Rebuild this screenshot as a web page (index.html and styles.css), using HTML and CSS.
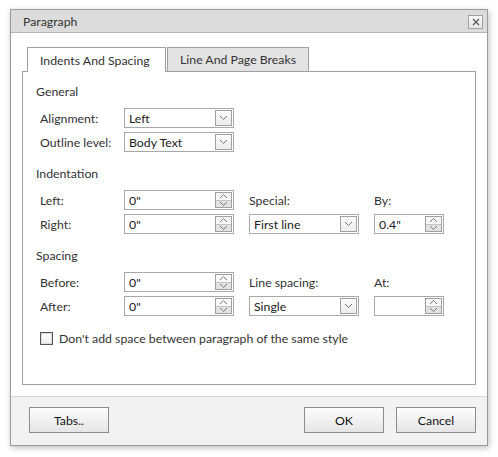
FILE: index.html
```html
<!DOCTYPE html>
<html>
<head>
<meta charset="utf-8">
<link rel="stylesheet" href="styles.css">
</head>
<body>
<div class="dialog">
  <div class="titlebar">
    <span class="title">Paragraph</span>
    <span class="close"><svg width="8" height="8" viewBox="0 0 8 8"><path d="M1 1L7 7M7 1L1 7" stroke="#555" stroke-width="1.2"/></svg></span>
  </div>
  <div class="body">
    <div class="tabs">
      <div class="tab active">Indents And Spacing</div>
      <div class="tab second">Line And Page Breaks</div>
    </div>
    <div class="panel">
      <section class="group">
        <div class="heading">General</div>
        <div class="grid">
          <span class="lbl">Alignment:</span>
          <div class="field">Left<span class="dd"><svg width="9" height="6" viewBox="0 0 9 6"><path d="M1 1L4.5 4.5L8 1" fill="none" stroke="#777" stroke-width="1"/></svg></span></div>
          <span></span><span></span>
          <span class="lbl">Outline level:</span>
          <div class="field">Body Text<span class="dd"><svg width="9" height="6" viewBox="0 0 9 6"><path d="M1 1L4.5 4.5L8 1" fill="none" stroke="#777" stroke-width="1"/></svg></span></div>
        </div>
      </section>
      <section class="group">
        <div class="heading">Indentation</div>
        <div class="grid">
          <span class="lbl">Left:</span>
          <div class="field">0"<span class="spin"><span class="up"><svg width="9" height="6" viewBox="0 0 9 6"><path d="M1 5L4.5 1.5L8 5" fill="none" stroke="#777"/></svg></span><span class="down"><svg width="9" height="6" viewBox="0 0 9 6"><path d="M1 1L4.5 4.5L8 1" fill="none" stroke="#777"/></svg></span></span></div>
          <span class="lbl">Special:</span>
          <span class="lbl">By:</span>
          <span class="lbl">Right:</span>
          <div class="field">0"<span class="spin"><span class="up"><svg width="9" height="6" viewBox="0 0 9 6"><path d="M1 5L4.5 1.5L8 5" fill="none" stroke="#777"/></svg></span><span class="down"><svg width="9" height="6" viewBox="0 0 9 6"><path d="M1 1L4.5 4.5L8 1" fill="none" stroke="#777"/></svg></span></span></div>
          <div class="field">First line<span class="dd"><svg width="9" height="6" viewBox="0 0 9 6"><path d="M1 1L4.5 4.5L8 1" fill="none" stroke="#777" stroke-width="1"/></svg></span></div>
          <div class="field short">0.4"<span class="spin"><span class="up"><svg width="9" height="6" viewBox="0 0 9 6"><path d="M1 5L4.5 1.5L8 5" fill="none" stroke="#777"/></svg></span><span class="down"><svg width="9" height="6" viewBox="0 0 9 6"><path d="M1 1L4.5 4.5L8 1" fill="none" stroke="#777"/></svg></span></span></div>
        </div>
      </section>
      <section class="group">
        <div class="heading">Spacing</div>
        <div class="grid">
          <span class="lbl">Before:</span>
          <div class="field">0"<span class="spin"><span class="up"><svg width="9" height="6" viewBox="0 0 9 6"><path d="M1 5L4.5 1.5L8 5" fill="none" stroke="#777"/></svg></span><span class="down"><svg width="9" height="6" viewBox="0 0 9 6"><path d="M1 1L4.5 4.5L8 1" fill="none" stroke="#777"/></svg></span></span></div>
          <span class="lbl">Line spacing:</span>
          <span class="lbl">At:</span>
          <span class="lbl">After:</span>
          <div class="field">0"<span class="spin"><span class="up"><svg width="9" height="6" viewBox="0 0 9 6"><path d="M1 5L4.5 1.5L8 5" fill="none" stroke="#777"/></svg></span><span class="down"><svg width="9" height="6" viewBox="0 0 9 6"><path d="M1 1L4.5 4.5L8 1" fill="none" stroke="#777"/></svg></span></span></div>
          <div class="field">Single<span class="dd"><svg width="9" height="6" viewBox="0 0 9 6"><path d="M1 1L4.5 4.5L8 1" fill="none" stroke="#777" stroke-width="1"/></svg></span></div>
          <div class="field short"><span class="spin"><span class="up"><svg width="9" height="6" viewBox="0 0 9 6"><path d="M1 5L4.5 1.5L8 5" fill="none" stroke="#777"/></svg></span><span class="down"><svg width="9" height="6" viewBox="0 0 9 6"><path d="M1 1L4.5 4.5L8 1" fill="none" stroke="#777"/></svg></span></span></div>
        </div>
      </section>
      <div class="check-row">
        <span class="checkbox"></span>
        <span>Don't add space between paragraph of the same style</span>
      </div>
    </div>
  </div>
  <div class="footer">
    <div class="btn">Tabs..</div>
    <div class="spacer"></div>
    <div class="btn">OK</div>
    <div class="btn">Cancel</div>
  </div>
</div>
</body>
</html>
```

FILE: styles.css
```css
* { box-sizing: border-box; }
html, body { margin: 0; padding: 0; background: #fff; }
body {
  padding: 9px 10px;
  font-family: Lato, "Liberation Sans", sans-serif;
  font-size: 12.3px;
  color: #333;
}
.dialog {
  width: 478px;
  height: 437px;
  border: 1px solid #999;
  background: #fff;
  box-shadow: 1px 2px 6px rgba(0,0,0,0.25);
  display: flex;
  flex-direction: column;
}
.titlebar {
  height: 23px;
  background: #dcdcdc;
  border-bottom: 1px solid #b4b4b4;
  display: flex;
  align-items: center;
  padding: 0 4px 0 12px;
}
.title { flex: 1; color: #333; }
.close {
  width: 15px;
  height: 14px;
  border: 1px solid #a0a0a0;
  background: linear-gradient(#fafafa, #e4e4e4);
  display: flex;
  align-items: center;
  justify-content: center;
  margin-top: 1px;
}
.body {
  flex: 1;
  padding: 14px 11px 11px 11px;
  display: flex;
  flex-direction: column;
}
.tabs {
  display: flex;
  align-items: flex-end;
  padding-left: 5px;
  height: 24px;
  position: relative;
  z-index: 1;
}
.tab {
  width: 139px;
  height: 24px;
  padding: 0 0 0 12px;
  border: 1px solid #a0a0a0;
  border-bottom: none;
  background: #e3e3e3;
  display: flex;
  align-items: center;
  white-space: nowrap;
}
.tab.second { width: 142px; margin-left: 1px; }
.tab.active {
  height: 25px;
  margin-bottom: -1px;
  background: #fff;
}
.panel {
  flex: 1;
  border: 1px solid #a0a0a0;
  padding: 12px 13px 0 13px;
}
.group { margin-bottom: 14px; }
.heading { height: 16px; line-height: 16px; margin-bottom: 8px; }
.grid {
  display: grid;
  grid-template-columns: 84px 125px 125px 70px;
  grid-auto-rows: 20px;
  row-gap: 4px;
  padding-left: 4px;
}
.lbl { display: flex; align-items: center; white-space: nowrap; }
.field {
  width: 110px;
  border: 1px solid #a8a8a8;
  height: 20px;
  display: flex;
  align-items: center;
  padding-left: 4px;
  position: relative;
  color: #222;
}
.field.short { width: 70px; }
.dd {
  position: absolute;
  right: 1px;
  top: 1px;
  width: 17px;
  height: 16px;
  border: 1px solid #a0a0a0;
  background: linear-gradient(#fcfcfc, #ececec);
  display: flex;
  align-items: center;
  justify-content: center;
}
.spin {
  position: absolute;
  right: 1px;
  top: 1px;
  width: 17px;
  height: 16px;
  border: 1px solid #a0a0a0;
  display: flex;
  flex-direction: column;
}
.spin .up, .spin .down {
  flex: 1;
  display: flex;
  align-items: center;
  justify-content: center;
}
.spin .up { background: #f8f8f8; border-bottom: 1px solid #c4c4c4; }
.spin .down { background: #e2e2e2; }
.check-row {
  display: flex;
  align-items: center;
  height: 16px;
  margin-top: 2px;
  padding-left: 4px;
  gap: 6px;
}
.checkbox {
  width: 13px;
  height: 13px;
  border: 1px solid #555;
  box-shadow: inset 0 0 0 1px #ddd;
  background: linear-gradient(#fff, #f0f0f0);
}
.footer {
  height: 49px;
  border-top: 1px solid #d8d8d8;
  background: #f2f2f2;
  display: flex;
  align-items: flex-start;
  padding: 10px 11px 0 18px;
  gap: 12px;
}
.spacer { flex: 1; }
.btn {
  width: 80px;
  height: 26px;
  border: 1px solid #8c8c8c;
  background: linear-gradient(#fdfdfd, #e5e5e5);
  display: flex;
  align-items: center;
  justify-content: center;
  color: #111;
}
```
